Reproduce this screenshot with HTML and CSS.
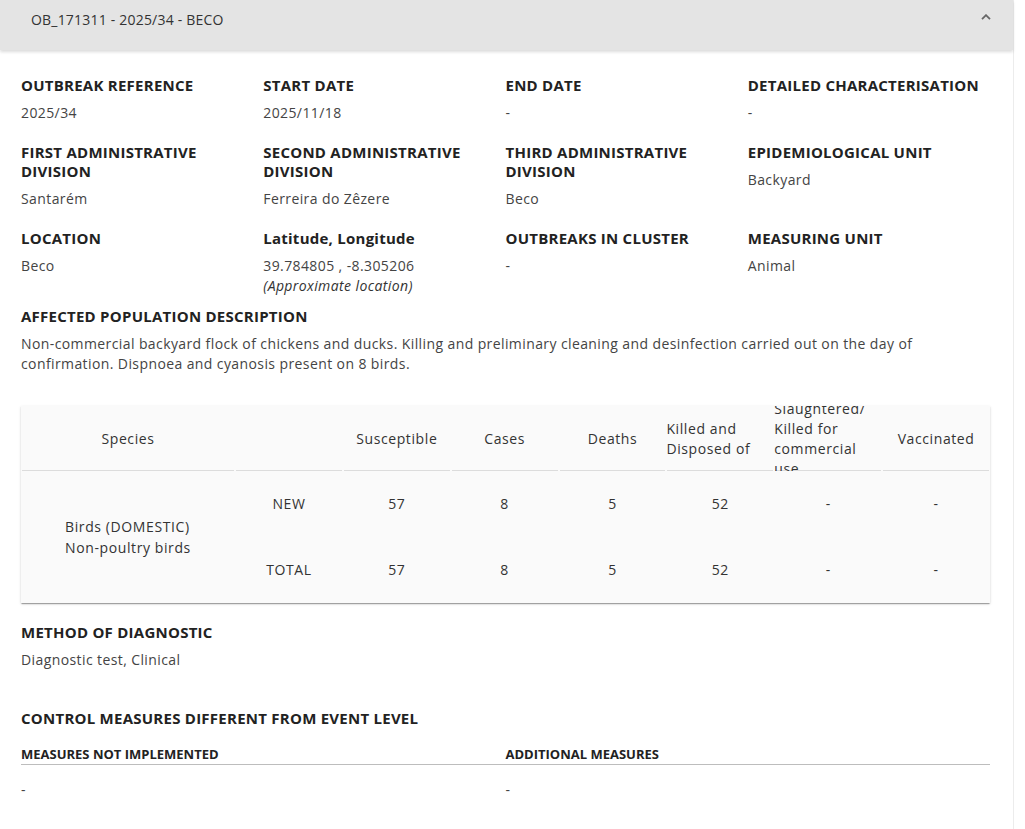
FILE: index.html
```html
<!DOCTYPE html>
<html lang="en">
<head>
    <meta charset="UTF-8">
    <meta name="viewport" content="width=device-width, initial-scale=1.0">
    <title>OB_171311 - 2025/34 - BECO</title>
    <link rel="stylesheet" href="styles.css">
</head>
<body>
    <div class="panel">
        <div class="panel-header">
            <span class="panel-title">OB_171311 - 2025/34 - BECO</span>
            <svg class="chevron" width="10" height="6" viewBox="0 0 10 6">
                <polyline points="1,5.2 5,1.2 9,5.2" fill="none" stroke="#666" stroke-width="1.8"/>
            </svg>
        </div>

        <div class="panel-body">
            <div class="field-grid">
                <div class="field">
                    <div class="field-label">OUTBREAK REFERENCE</div>
                    <div class="field-value">2025/34</div>
                </div>
                <div class="field">
                    <div class="field-label">START DATE</div>
                    <div class="field-value">2025/11/18</div>
                </div>
                <div class="field">
                    <div class="field-label">END DATE</div>
                    <div class="field-value">-</div>
                </div>
                <div class="field">
                    <div class="field-label">DETAILED CHARACTERISATION</div>
                    <div class="field-value">-</div>
                </div>

                <div class="field">
                    <div class="field-label">FIRST ADMINISTRATIVE DIVISION</div>
                    <div class="field-value">Santarém</div>
                </div>
                <div class="field">
                    <div class="field-label">SECOND ADMINISTRATIVE DIVISION</div>
                    <div class="field-value">Ferreira do Zêzere</div>
                </div>
                <div class="field">
                    <div class="field-label">THIRD ADMINISTRATIVE DIVISION</div>
                    <div class="field-value">Beco</div>
                </div>
                <div class="field">
                    <div class="field-label">EPIDEMIOLOGICAL UNIT</div>
                    <div class="field-value">Backyard</div>
                </div>

                <div class="field">
                    <div class="field-label">LOCATION</div>
                    <div class="field-value">Beco</div>
                </div>
                <div class="field">
                    <div class="field-label">Latitude, Longitude</div>
                    <div class="field-value">39.784805 , -8.305206</div>
                    <div class="field-value"><em>(Approximate location)</em></div>
                </div>
                <div class="field">
                    <div class="field-label">OUTBREAKS IN CLUSTER</div>
                    <div class="field-value">-</div>
                </div>
                <div class="field">
                    <div class="field-label">MEASURING UNIT</div>
                    <div class="field-value">Animal</div>
                </div>
            </div>

            <div class="field">
                <div class="field-label">AFFECTED POPULATION DESCRIPTION</div>
                <div class="field-value">Non-commercial backyard flock of chickens and ducks. Killing and preliminary cleaning and desinfection carried out on the day of confirmation. Dispnoea and cyanosis present on 8 birds.</div>
            </div>

            <div class="species-table">
                <div class="th">Species</div>
                <div class="th"></div>
                <div class="th">Susceptible</div>
                <div class="th">Cases</div>
                <div class="th">Deaths</div>
                <div class="th"><span>Killed and Disposed of</span></div>
                <div class="th"><span>Slaughtered/ Killed for commercial use</span></div>
                <div class="th">Vaccinated</div>

                <div class="td species"><span>Birds (DOMESTIC)<br>Non-poultry birds</span></div>
                <div class="td">NEW</div>
                <div class="td">57</div>
                <div class="td">8</div>
                <div class="td">5</div>
                <div class="td">52</div>
                <div class="td">-</div>
                <div class="td">-</div>

                <div class="td">TOTAL</div>
                <div class="td">57</div>
                <div class="td">8</div>
                <div class="td">5</div>
                <div class="td">52</div>
                <div class="td">-</div>
                <div class="td">-</div>
            </div>

            <div class="field">
                <div class="field-label">METHOD OF DIAGNOSTIC</div>
                <div class="field-value">Diagnostic test, Clinical</div>
            </div>

            <h3 class="section-title">CONTROL MEASURES DIFFERENT FROM EVENT LEVEL</h3>
            <div class="measures">
                <div class="measures-head">MEASURES NOT IMPLEMENTED</div>
                <div class="measures-head">ADDITIONAL MEASURES</div>
                <div class="field-value">-</div>
                <div class="field-value">-</div>
            </div>
        </div>
    </div>
</body>
</html>
```

FILE: styles.css
```css
body {
    margin: 0;
    background: #fff;
    font-family: "Open Sans", Arial, sans-serif;
    color: #333;
}
.panel {
    width: 1013px;
    min-height: 829px;
    border-right: 1px solid #ececec;
}
.panel-header {
    height: 50px;
    box-sizing: border-box;
    padding: 11px 22px 0 31px;
    background: #e4e4e4;
    display: flex;
    justify-content: space-between;
    align-items: flex-start;
    box-shadow: 0 2px 3px rgba(0, 0, 0, 0.14);
    position: relative;
    z-index: 1;
}
.panel-title {
    font-size: 14px;
    line-height: 18px;
    letter-spacing: 0.2px;
    color: #333;
}
.chevron {
    margin-top: 3px;
}
.panel-body {
    padding: 26px 23px 40px 21px;
}
.field-grid {
    display: grid;
    grid-template-columns: repeat(4, 1fr);
    row-gap: 20px;
    margin-bottom: 11px;
}
.field-label {
    font-size: 15px;
    line-height: 19px;
    font-weight: 700;
    letter-spacing: 0.25px;
    color: #222;
    margin-bottom: 8px;
    padding-right: 4px;
}
.field-value {
    font-size: 14px;
    line-height: 20px;
    letter-spacing: 0.4px;
    color: #444;
}
.field-value em {
    color: #333;
}

/* species table */
.species-table {
    margin: 32px 0 20px;
    display: grid;
    grid-template-columns: 214px repeat(7, 1fr);
    grid-template-rows: 65px 66px 66px;
    background: #fafafa;
    box-shadow: 0 2px 1px -1px rgba(0, 0, 0, 0.2), 0 1px 1px 0 rgba(0, 0, 0, 0.14), 0 1px 3px 0 rgba(0, 0, 0, 0.12);
    font-size: 14px;
    line-height: 20px;
    letter-spacing: 0.6px;
    color: #333;
}
.th,
.td {
    display: flex;
    align-items: center;
    justify-content: center;
    overflow: hidden;
}
.th {
    background-image: linear-gradient(#dcdcdc, #dcdcdc);
    background-size: calc(100% - 2px) 1px;
    background-position: center bottom;
    background-repeat: no-repeat;
}
.td.species {
    grid-row: span 2;
    line-height: 21px;
}

.section-title {
    margin: 39px 0 18px;
    font-size: 15px;
    line-height: 19px;
    font-weight: 700;
    letter-spacing: 0.25px;
    color: #222;
}
.measures {
    display: grid;
    grid-template-columns: 1fr 1fr;
    row-gap: 15px;
}
.measures-head {
    font-size: 13px;
    line-height: 17px;
    font-weight: 700;
    color: #222;
    padding-bottom: 1px;
    border-bottom: 1px solid #bdbdbd;
}
```
